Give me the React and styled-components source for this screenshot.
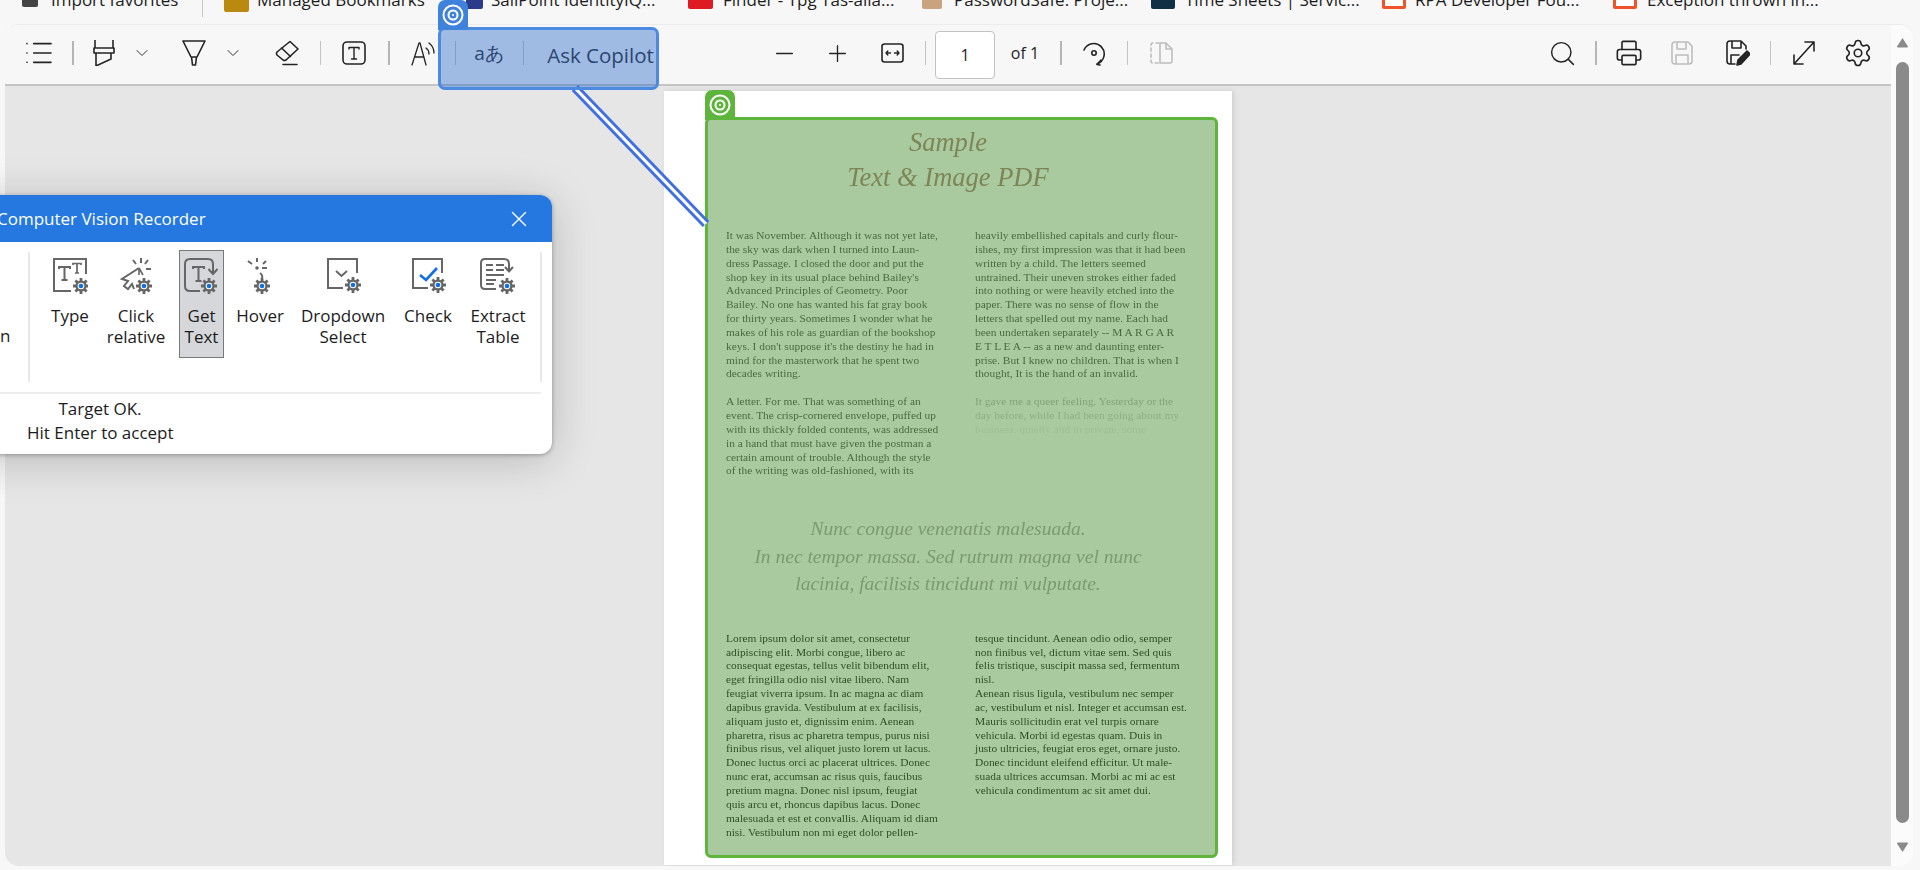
import React from "react";
import styled, { createGlobalStyle } from "styled-components";
import { ChevronDown, List, Minus, Plus, Printer, Search, Settings, X } from "lucide-react";

const GlobalStyle = createGlobalStyle`
  html, body { margin: 0; padding: 0; background: #f7f7f7; overflow: hidden; }
  * { box-sizing: border-box; }
`;

const Screen = styled.div`
  position: relative;
  width: 1920px;
  height: 870px;
  overflow: hidden;
  background: #f7f7f7;
  font-family: "Open Sans", "Noto Sans", sans-serif;
  color: #1c1c1c;
`;

/* bookmarks bar, cut off by the top of the capture */
const BookmarkBar = styled.div`
  height: 24px;
  overflow: hidden;
`;
const BookmarkRow = styled.div`
  display: flex;
  align-items: center;
  height: 24px;
  margin-top: -13px;
  font-size: 17px;
  white-space: nowrap;
`;
const BookmarkIcon = styled.span`
  flex: none;
  width: ${(p) => p.$w}px;
  height: 24px;
  margin-left: ${(p) => p.$ml}px;
  margin-top: ${(p) => p.$top || 0}px;
  background: ${(p) => p.$bg};
  border: ${(p) => (p.$line ? `3px solid ${p.$line}` : "none")};
  border-radius: 2px;
`;
const BookmarkLabel = styled.span`
  flex: none;
  width: ${(p) => p.$w}px;
  margin-left: ${(p) => p.$ml}px;
`;
const BookmarkSep = styled.span`
  flex: none;
  width: 1px;
  height: 24px;
  margin-left: 25px;
  margin-top: 12px;
  background: #c9c9c9;
`;

/* pdf viewer frame */
const Frame = styled.div`
  display: flex;
  width: 1908px;
  height: 842px;
  margin-left: 5px;
  overflow: hidden;
  border-radius: 14px;
  border-top: 1px solid #ececec;
  background: #fbfbfb;
`;
const Main = styled.div`
  display: flex;
  flex: none;
  flex-direction: column;
  width: 1886px;
`;
const Toolbar = styled.div`
  display: flex;
  flex: none;
  align-items: center;
  height: 61px;
  background: #f7f7f7;
  border-bottom: 2px solid #c4c4c4;
`;
const Tool = styled.div`
  display: flex;
  flex: none;
  align-items: center;
  justify-content: center;
  width: ${(p) => p.$w}px;
  height: 30px;
  margin-left: ${(p) => p.$ml}px;
  margin-bottom: ${(p) => p.$mb ?? 3}px;
  color: ${(p) => (p.$off ? "#bdbdbd" : "#242424")};
  font-size: ${(p) => p.$size || 16}px;
  white-space: nowrap;

  svg {
    flex: none;
  }
`;
const Sep = styled.span`
  flex: none;
  width: ${(p) => p.$w || 1}px;
  height: 24px;
  margin-left: ${(p) => p.$ml}px;
  margin-bottom: 3px;
  background: ${(p) => (p.$w ? "#b5b5b5" : "#c4c4c4")};
`;
const PageInput = styled.div`
  display: flex;
  flex: none;
  align-items: center;
  justify-content: center;
  width: 60px;
  height: 48px;
  margin-left: ${(p) => p.$ml}px;
  background: #fff;
  border: 1px solid #c2c2c2;
  border-radius: 4px;
  font-size: 16px;
`;
const Canvas = styled.div`
  display: flex;
  flex: 1;
  justify-content: center;
  min-height: 0;
  padding-top: 5px;
  background: #e6e6e6;
`;
const Scrollbar = styled.div`
  display: flex;
  flex: none;
  flex-direction: column;
  align-items: center;
  width: 22px;
  padding-top: 12px;
  background: #fbfbfb;
`;
const ScrollThumb = styled.div`
  width: 13px;
  height: 761px;
  margin-top: 14px;
  margin-bottom: 19px;
  background: #8a8a8a;
  border-radius: 7px;
`;

/* pdf page */
const Page = styled.div`
  position: relative;
  width: 568px;
  height: 774px;
  padding: 34px 0 0 62px;
  background: #fff;
  box-shadow: 2px 0 5px rgba(0, 0, 0, 0.1);
  font-family: "Liberation Serif", "Times New Roman", serif;
  filter: blur(0.25px);
`;
const Title = styled.div`
  margin-right: 62px;
  color: #a6746c;
  font-size: 26.5px;
  font-style: italic;
  line-height: 35px;
  text-align: center;
  white-space: nowrap;
`;
const Columns = styled.div`
  display: grid;
  grid-template-columns: 249px 249px;
  margin-top: ${(p) => p.$mt}px;
`;
const Column = styled.div`
  color: ${(p) => p.$color};
  font-size: 11.4px;
  line-height: 13.85px;
  white-space: nowrap;
`;
const Line = styled.div`
  height: 13.85px;
  opacity: ${(p) => p.$fade ?? 1};
`;
const Pull = styled.div`
  margin-top: 37px;
  margin-right: 62px;
  color: #a4a0a0;
  font-size: 19.5px;
  font-style: italic;
  line-height: 27.5px;
  text-align: center;
  white-space: nowrap;
`;

/* recorder overlays */
const Connector = styled.svg`
  position: absolute;
  left: 560px;
  top: 80px;
`;
const GreenTarget = styled.div`
  position: absolute;
  left: 41px;
  top: 26px;
  width: 513px;
  height: 741px;
  background: rgba(84, 148, 64, 0.5);
  border: 3px solid #5db53c;
  border-radius: 6px;
`;
const BlueTarget = styled.div`
  position: absolute;
  left: 438px;
  top: 27px;
  width: 221px;
  height: 63px;
  background: rgba(51, 111, 202, 0.45);
  border: 3px solid #4a8ae0;
  border-radius: 7px;
`;
const TargetTab = styled.div`
  position: absolute;
  left: -3px;
  top: -30px;
  display: flex;
  align-items: center;
  justify-content: center;
  width: 30px;
  height: 30px;
  background: ${(p) => p.$bg};
  border-radius: 7px 7px 0 0;
`;

/* recorder dialog */
const Dialog = styled.div`
  position: absolute;
  left: -60px;
  top: 195px;
  width: 612px;
  height: 259px;
  overflow: hidden;
  background: #fff;
  border-radius: 12px;
  box-shadow: 0 6px 46px rgba(0, 0, 0, 0.2), 0 1px 4px rgba(0, 0, 0, 0.3);
`;
const DialogHeader = styled.div`
  display: flex;
  align-items: center;
  justify-content: space-between;
  height: 47px;
  padding: 0 20px 0 57px;
  background: #2478df;
  color: #fff;
  font-size: 17px;
`;
const Ribbon = styled.div`
  display: flex;
  height: 130px;
  margin-top: 10px;
  margin-left: 88px;
  width: 514px;
  border-left: 2px solid #e8e8e8;
  border-right: 2px solid #e8e8e8;
  padding-left: 8px;
`;
const CutLabel = styled.div`
  position: absolute;
  left: 60px;
  top: 130px;
  font-size: 17px;
  line-height: 21px;
`;
const RibbonItem = styled.div`
  display: flex;
  flex: none;
  flex-direction: column;
  align-items: center;
  width: ${(p) => p.$w}px;
  height: 108px;
  margin-left: ${(p) => p.$ml || 0}px;
  margin-top: -2px;
  padding-top: 8px;
  background: ${(p) => (p.$on ? "#d6d7db" : "transparent")};
  outline: ${(p) => (p.$on ? "1.5px solid #77797d" : "none")};
  outline-offset: -1.5px;
`;
const RibbonLabel = styled.div`
  margin-top: 11px;
  font-size: 17px;
  line-height: 21px;
  text-align: center;
  white-space: nowrap;
`;
const StatusBar = styled.div`
  width: 601px;
  margin-top: 10px;
  padding-top: 3px;
  padding-left: 0;
  border-top: 2px solid #eee;
`;
const Status = styled.div`
  width: 146px;
  margin-left: 87px;
  font-size: 17px;
  line-height: 24px;
  text-align: center;
  white-space: nowrap;
`;

const upperLeft = [
  "It was November. Although it was not yet late,",
  "the sky was dark when I turned into Laun-",
  "dress Passage. I closed the door and put the",
  "shop key in its usual place behind Bailey's",
  "Advanced Principles of Geometry. Poor",
  "Bailey. No one has wanted his fat gray book",
  "for thirty years. Sometimes I wonder what he",
  "makes of his role as guardian of the bookshop",
  "keys. I don't suppose it's the destiny he had in",
  "mind for the masterwork that he spent two",
  "decades writing.",
  "\u00a0",
  "A letter. For me. That was something of an",
  "event. The crisp-cornered envelope, puffed up",
  "with its thickly folded contents, was addressed",
  "in a hand that must have given the postman a",
  "certain amount of trouble. Although the style",
  "of the writing was old-fashioned, with its",
];
const upperRight = [
  "heavily embellished capitals and curly flour-",
  "ishes, my first impression was that it had been",
  "written by a child. The letters seemed",
  "untrained. Their uneven strokes either faded",
  "into nothing or were heavily etched into the",
  "paper. There was no sense of flow in the",
  "letters that spelled out my name. Each had",
  "been undertaken separately -- M A R G A R",
  "E T L E A -- as a new and daunting enter-",
  "prise. But I knew no children. That is when I",
  "thought, It is the hand of an invalid.",
  "\u00a0",
];
const fadingRight = [
  ["It gave me a queer feeling. Yesterday or the", 0.42],
  ["day before, while I had been going about my", 0.3],
  ["business, quietly and in private, some", 0.12],
];
const lowerLeft = [
  "Lorem ipsum dolor sit amet, consectetur",
  "adipiscing elit. Morbi congue, libero ac",
  "consequat egestas, tellus velit bibendum elit,",
  "eget fringilla odio nisl vitae libero. Nam",
  "feugiat viverra ipsum. In ac magna ac diam",
  "dapibus gravida. Vestibulum at ex facilisis,",
  "aliquam justo et, dignissim enim. Aenean",
  "pharetra, risus ac pharetra tempus, purus nisi",
  "finibus risus, vel aliquet justo lorem ut lacus.",
  "Donec luctus orci ac placerat ultrices. Donec",
  "nunc erat, accumsan ac risus quis, faucibus",
  "pretium magna. Donec nisl ipsum, feugiat",
  "quis arcu et, rhoncus dapibus lacus. Donec",
  "malesuada et est et convallis. Aliquam id diam",
  "nisi. Vestibulum non mi eget dolor pellen-",
];
const lowerRight = [
  "tesque tincidunt. Aenean odio odio, semper",
  "non finibus vel, dictum vitae sem. Sed quis",
  "felis tristique, suscipit massa sed, fermentum",
  "nisl.",
  "Aenean risus ligula, vestibulum nec semper",
  "ac, vestibulum et nisl. Integer et accumsan est.",
  "Mauris sollicitudin erat vel turpis ornare",
  "vehicula. Morbi id egestas quam. Duis in",
  "justo ultricies, feugiat eros eget, ornare justo.",
  "Donec tincidunt eleifend efficitur. Ut male-",
  "suada ultrices accumsan. Morbi ac mi ac est",
  "vehicula condimentum ac sit amet dui.",
];

const Svg = ({ w = 24, h = 24, box, children, sw = 1.6 }) => (
  <svg width={w} height={h} viewBox={box || `0 0 ${w} ${h}`} fill="none" stroke="currentColor" strokeWidth={sw} strokeLinecap="round" strokeLinejoin="round">
    {children}
  </svg>
);

const TargetGlyph = () => (
  <svg width="22" height="22" viewBox="0 0 22 22" fill="none" stroke="#fff" strokeWidth="2">
    <circle cx="11" cy="11" r="9.5" />
    <circle cx="11" cy="11" r="4.5" />
    <circle cx="11" cy="11" r="1" fill="#fff" stroke="none" />
  </svg>
);

const Gear = ({ x, y }) => (
  <g transform={`translate(${x} ${y})`}>
    <path d="M0 -8 V8 M-8 0 H8 M-5.6 -5.6 L5.6 5.6 M-5.6 5.6 L5.6 -5.6" stroke="#666" strokeWidth="2.8" strokeLinecap="butt" />
    <circle r="5.6" fill="#666" stroke="none" />
    <circle r="3.3" fill="#fff" stroke="none" />
    <circle r="2.3" fill="#0f6fe8" stroke="none" />
  </g>
);

const RibbonIcon = ({ box, gear, children }) => (
  <svg width="36" height="36" viewBox={box} fill="none" stroke="#666" strokeWidth="2">
    {children}
    <Gear x={gear[0]} y={gear[1]} />
  </svg>
);

const TypeIcon = () => (
  <RibbonIcon box="-1 0 36 36" gear={[28, 28]}>
    <path d="M33 16 V1 H1 V33 H18" />
    <path d="M6 11 V9 H17 V11 M11.5 9 V22 M8.5 22 H14.5" />
    <path d="M20 7 V5.5 H28 V7 M24 5.5 V15 M22 15 H26" strokeWidth="1.7" />
  </RibbonIcon>
);
const ClickIcon = () => (
  <RibbonIcon box="-2 0 36 36" gear={[24, 28]}>
    <path d="M19 10 L2 21 L8 23 L4 28 L8 31 L12 26 L14 31" />
    <path d="M19 10 L19 17 M19 10 L23 17" strokeWidth="1.6" />
    <path d="M13 2 L16 6 M21 0 V5 M28 2 L25 6 M26 11 H31" />
  </RibbonIcon>
);
const GetTextIcon = () => (
  <RibbonIcon box="0 0 36 36" gear={[25, 28]}>
    <path d="M16 33 H6 Q1 33 1 28 V6 Q1 1 6 1 H24 Q29 1 29 6 V15" />
    <path d="M24.5 11 L29 16 L33.5 11" />
    <path d="M9 11 V9 H20 V11 M14.5 9 V23 M11.5 23 H17.5" />
  </RibbonIcon>
);
const HoverIcon = () => (
  <RibbonIcon box="0 0 36 36" gear={[20, 28]}>
    <circle cx="15" cy="10" r="1.8" fill="#666" stroke="none" />
    <path d="M6 3 L10 6 M15 0 V4 M24 3 L21 6 M20 10 H25 M18 15 Q21 17 20 20" />
  </RibbonIcon>
);
const DropdownIcon = () => (
  <RibbonIcon box="-2 0 36 36" gear={[26, 27]}>
    <path d="M30 15 V1 H1 V30 H16" />
    <path d="M9 13 L14.5 18 L20 13" />
  </RibbonIcon>
);
const CheckIcon = () => (
  <RibbonIcon box="-2 0 36 36" gear={[26, 27]}>
    <path d="M30 15 V1 H1 V30 H16" />
    <path d="M8 17 L14 22 L25 10" stroke="#0f6fe8" strokeWidth="2.6" />
  </RibbonIcon>
);
const ExtractIcon = () => (
  <RibbonIcon box="0 0 36 36" gear={[27, 28]}>
    <path d="M16 31 H5 Q1 31 1 27 V5 Q1 1 5 1 H24 Q29 1 29 6 V12" />
    <path d="M25 9 L29 13.5 L33 9" />
    <path d="M6 7 H13 M16 7 H24 M6 12 H13 M16 12 H24 M6 17 H24 M6 22 H16 M6 26 H14" />
  </RibbonIcon>
);

const ribbon = [
  { label: ["Type"], w: 64, Icon: TypeIcon },
  { label: ["Click", "relative"], w: 68, Icon: ClickIcon },
  { label: ["Get", "Text"], w: 45, ml: 9, on: true, Icon: GetTextIcon },
  { label: ["Hover"], w: 72, Icon: HoverIcon },
  { label: ["Dropdown", "Select"], w: 94, Icon: DropdownIcon },
  { label: ["Check"], w: 76, Icon: CheckIcon },
  { label: ["Extract", "Table"], w: 64, Icon: ExtractIcon },
];

const lines = (list) => list.map((text, i) => <Line key={i}>{text}</Line>);

export default function App() {
  return (
    <Screen>
      <GlobalStyle />
      <BookmarkBar>
        <BookmarkRow>
          <BookmarkIcon $w={16} $ml={22} $top={-8} $bg="#444" />
          <BookmarkLabel $w={126} $ml={13}>Import favorites</BookmarkLabel>
          <BookmarkSep />
          <BookmarkIcon $w={25} $ml={21} $top={2} $bg="#b98a0f" />
          <BookmarkLabel $w={175} $ml={8}>Managed Bookmarks</BookmarkLabel>
          <BookmarkIcon $w={17} $ml={34} $top={-4} $bg="#2c3a8c" />
          <BookmarkLabel $w={164} $ml={8}>SailPoint IdentityIQ...</BookmarkLabel>
          <BookmarkIcon $w={25} $ml={33} $top={-4} $bg="#e01a22" />
          <BookmarkLabel $w={170} $ml={10}>Finder - Tpg Tas-alia...</BookmarkLabel>
          <BookmarkIcon $w={20} $ml={29} $top={-4} $bg="#c9a27e" />
          <BookmarkLabel $w={169} $ml={12}>PasswordSafe: Proje...</BookmarkLabel>
          <BookmarkIcon $w={24} $ml={28} $top={-4} $bg="#0f3044" />
          <BookmarkLabel $w={168} $ml={10}>Time Sheets | Servic...</BookmarkLabel>
          <BookmarkIcon $w={24} $ml={29} $top={-4} $bg="#fff" $line="#f0522a" />
          <BookmarkLabel $w={165} $ml={9}>RPA Developer Fou...</BookmarkLabel>
          <BookmarkIcon $w={24} $ml={33} $top={-4} $bg="#fff" $line="#f0522a" />
          <BookmarkLabel $w={167} $ml={10}>Exception thrown in...</BookmarkLabel>
        </BookmarkRow>
      </BookmarkBar>

      <Frame>
        <Main>
          <Toolbar>
            <Tool $w={24} $ml={22}><List size={32} strokeWidth={1.2} /></Tool>
            <Sep $w={2} $ml={21} />
            <Tool $w={22} $ml={19}>
              <Svg w={22} h={26}>
                <path d="M2 0 V8 M20 0 V8 M1 8 H21 V13 H1 Z M3 13 V26 L18 19 V13" />
              </Svg>
            </Tool>
            <Tool $w={10} $ml={22}><ChevronDown size={20} strokeWidth={1.1} /></Tool>
            <Tool $w={22} $ml={36}>
              <Svg w={24} h={26}>
                <path d="M1 1 H23 L15 17 H9 Z M9.5 17 L10.5 25 H13.5 L14.5 17" />
              </Svg>
            </Tool>
            <Tool $w={10} $ml={23}><ChevronDown size={20} strokeWidth={1.1} /></Tool>
            <Tool $w={24} $ml={37}>
              <Svg w={24} h={26}>
                <path d="M15 1.5 L23 9 L11 20 Q9.5 21 8 20 L2 15 Q1 13.5 2 12 Z M6.5 8 L15.5 16.5 M8 24.5 H22" />
              </Svg>
            </Tool>
            <Sep $ml={21} />
            <Tool $w={24} $ml={21}>
              <Svg>
                <rect x="1" y="1" width="22" height="22" rx="4" />
                <path d="M7 8 V6.5 H17 V8 M12 6.5 V18 M9.5 18 H14.5" strokeWidth="1.4" />
              </Svg>
            </Tool>
            <Sep $w={2} $ml={22} />
            <Tool $w={24} $ml={21}>
              <Svg w={24} h={26} sw={1.3}>
                <path d="M1 25 L8 3 H9 L15 25 M3.5 17 H13" />
                <path d="M15 8 Q18 10 18 14 M18 3 Q23 7 23 13" />
              </Svg>
            </Tool>
            <Sep $ml={20} />
            <Tool $w={28} $ml={19} $size={19}>aあ</Tool>
            <Sep $ml={20} />
            <Tool $w={105} $ml={24} $size={20.5} $mb={0}>Ask Copilot</Tool>
            <Tool $w={16} $ml={123}><Minus size={27} strokeWidth={1.2} /></Tool>
            <Tool $w={16} $ml={37}><Plus size={27} strokeWidth={1.2} /></Tool>
            <Tool $w={23} $ml={36}>
              <Svg w={23} h={20}>
                <rect x="1" y="1" width="21" height="18" rx="2.5" />
                <path d="M5 10 H9.5 M6.8 8 L5 10 L6.8 12 M13.5 10 H18 M16.2 8 L18 10 L16.2 12" strokeWidth="1.4" />
              </Svg>
            </Tool>
            <Sep $ml={21} />
            <PageInput $ml={9}>1</PageInput>
            <Tool $w={28} $ml={16}>of 1</Tool>
            <Sep $w={2} $ml={21} />
            <Tool $w={24} $ml={20}>
              <Svg w={24} h={26}>
                <path d="M2 10 A10.5 10.5 0 1 1 15 24" />
                <circle cx="12" cy="13" r="2.2" />
                <path d="M19 20 L15 24.5 L18 25" />
              </Svg>
            </Tool>
            <Sep $ml={21} />
            <Tool $w={24} $ml={21} $off>
              <Svg w={24} h={24}>
                <path d="M10 2 H4 Q2 2 2 4 V20 Q2 22 4 22 H10" strokeDasharray="3 3" />
                <path d="M11 2 H17 L23 8 V20 Q23 22 21 22 H11 Z M17 2 V8 H23" />
              </Svg>
            </Tool>
            <Tool $w={22} $ml={378}><Search size={29} strokeWidth={1.2} /></Tool>
            <Sep $w={2} $ml={22} />
            <Tool $w={24} $ml={20}><Printer size={28} strokeWidth={1.4} /></Tool>
            <Tool $w={22} $ml={30} $off>
              <Svg w={22} h={24}>
                <path d="M4 1 H17 L21 5 V20 Q21 23 18 23 H4 Q1 23 1 20 V4 Q1 1 4 1 Z M6 1 V8 H15 V1 M5 23 V14 H17 V23" />
              </Svg>
            </Tool>
            <Tool $w={24} $ml={33}>
              <Svg w={24} h={26}>
                <path d="M9 24 H4 Q1 24 1 21 V4 Q1 1 4 1 H15 L20 6 V9 M6 1 V8 H15 V1 M5 24 V15 H13" />
                <path d="M11 25 L12 20 L21 11 L24 14 L15 24 Z" fill="currentColor" />
              </Svg>
            </Tool>
            <Sep $ml={20} />
            <Tool $w={22} $ml={22}>
              <Svg w={22} h={24}>
                <path d="M1 23 L21 1 M12 1 H21 V10 M1 14 V23 H10" />
              </Svg>
            </Tool>
            <Tool $w={25} $ml={30}><Settings size={30} strokeWidth={1.3} /></Tool>
          </Toolbar>
          <Canvas>
            <Page>
              <Title>
                Sample
                <br />
                Text &amp; Image PDF
              </Title>
              <Columns $mt={34}>
                <Column $color="#3d3d3d">{lines(upperLeft)}</Column>
                <Column $color="#3d3d3d">
                  {lines(upperRight)}
                  {fadingRight.map(([text, fade]) => (
                    <Line key={text} $fade={fade}>{text}</Line>
                  ))}
                </Column>
              </Columns>
              <Pull>
                Nunc congue venenatis malesuada.
                <br />
                In nec tempor massa. Sed rutrum magna vel nunc
                <br />
                lacinia, facilisis tincidunt mi vulputate.
              </Pull>
              <Columns $mt={34}>
                <Column $color="#000">{lines(lowerLeft)}</Column>
                <Column $color="#000">{lines(lowerRight)}</Column>
              </Columns>
              <GreenTarget>
                <TargetTab $bg="#5db53c"><TargetGlyph /></TargetTab>
              </GreenTarget>
            </Page>
          </Canvas>
        </Main>
        <Scrollbar>
          <svg width="13" height="11" viewBox="0 0 13 11"><path d="M6.5 1 L12 9.5 Q12 10.5 11 10.5 H2 Q1 10.5 1 9.5 Z" fill="#8a8a8a" /></svg>
          <ScrollThumb />
          <svg width="13" height="11" viewBox="0 0 13 11"><path d="M6.5 10 L12 1.5 Q12 0.5 11 0.5 H2 Q1 0.5 1 1.5 Z" fill="#8a8a8a" /></svg>
        </Scrollbar>
      </Frame>

      <Connector width="160" height="160" viewBox="0 0 160 160" fill="none">
        <path d="M15 8 L146 144" stroke="#3f6fe0" strokeWidth="9" />
        <path d="M15 8 L146 144" stroke="#fff" strokeWidth="3.2" />
      </Connector>

      <BlueTarget>
        <TargetTab $bg="#3f82dc"><TargetGlyph /></TargetTab>
      </BlueTarget>

      <Dialog>
        <DialogHeader>
          <span>Computer Vision Recorder</span>
          <X size={26} strokeWidth={1.3} />
        </DialogHeader>
        <CutLabel>n</CutLabel>
        <Ribbon>
          {ribbon.map(({ label, w, ml, on, Icon }) => (
            <RibbonItem key={label[0]} $w={w} $ml={ml} $on={on}>
              <Icon />
              <RibbonLabel>
                {label.map((t) => <div key={t}>{t}</div>)}
              </RibbonLabel>
            </RibbonItem>
          ))}
        </Ribbon>
        <StatusBar>
          <Status>Target OK.</Status>
          <Status>Hit Enter to accept</Status>
        </StatusBar>
      </Dialog>
    </Screen>
  );
}
